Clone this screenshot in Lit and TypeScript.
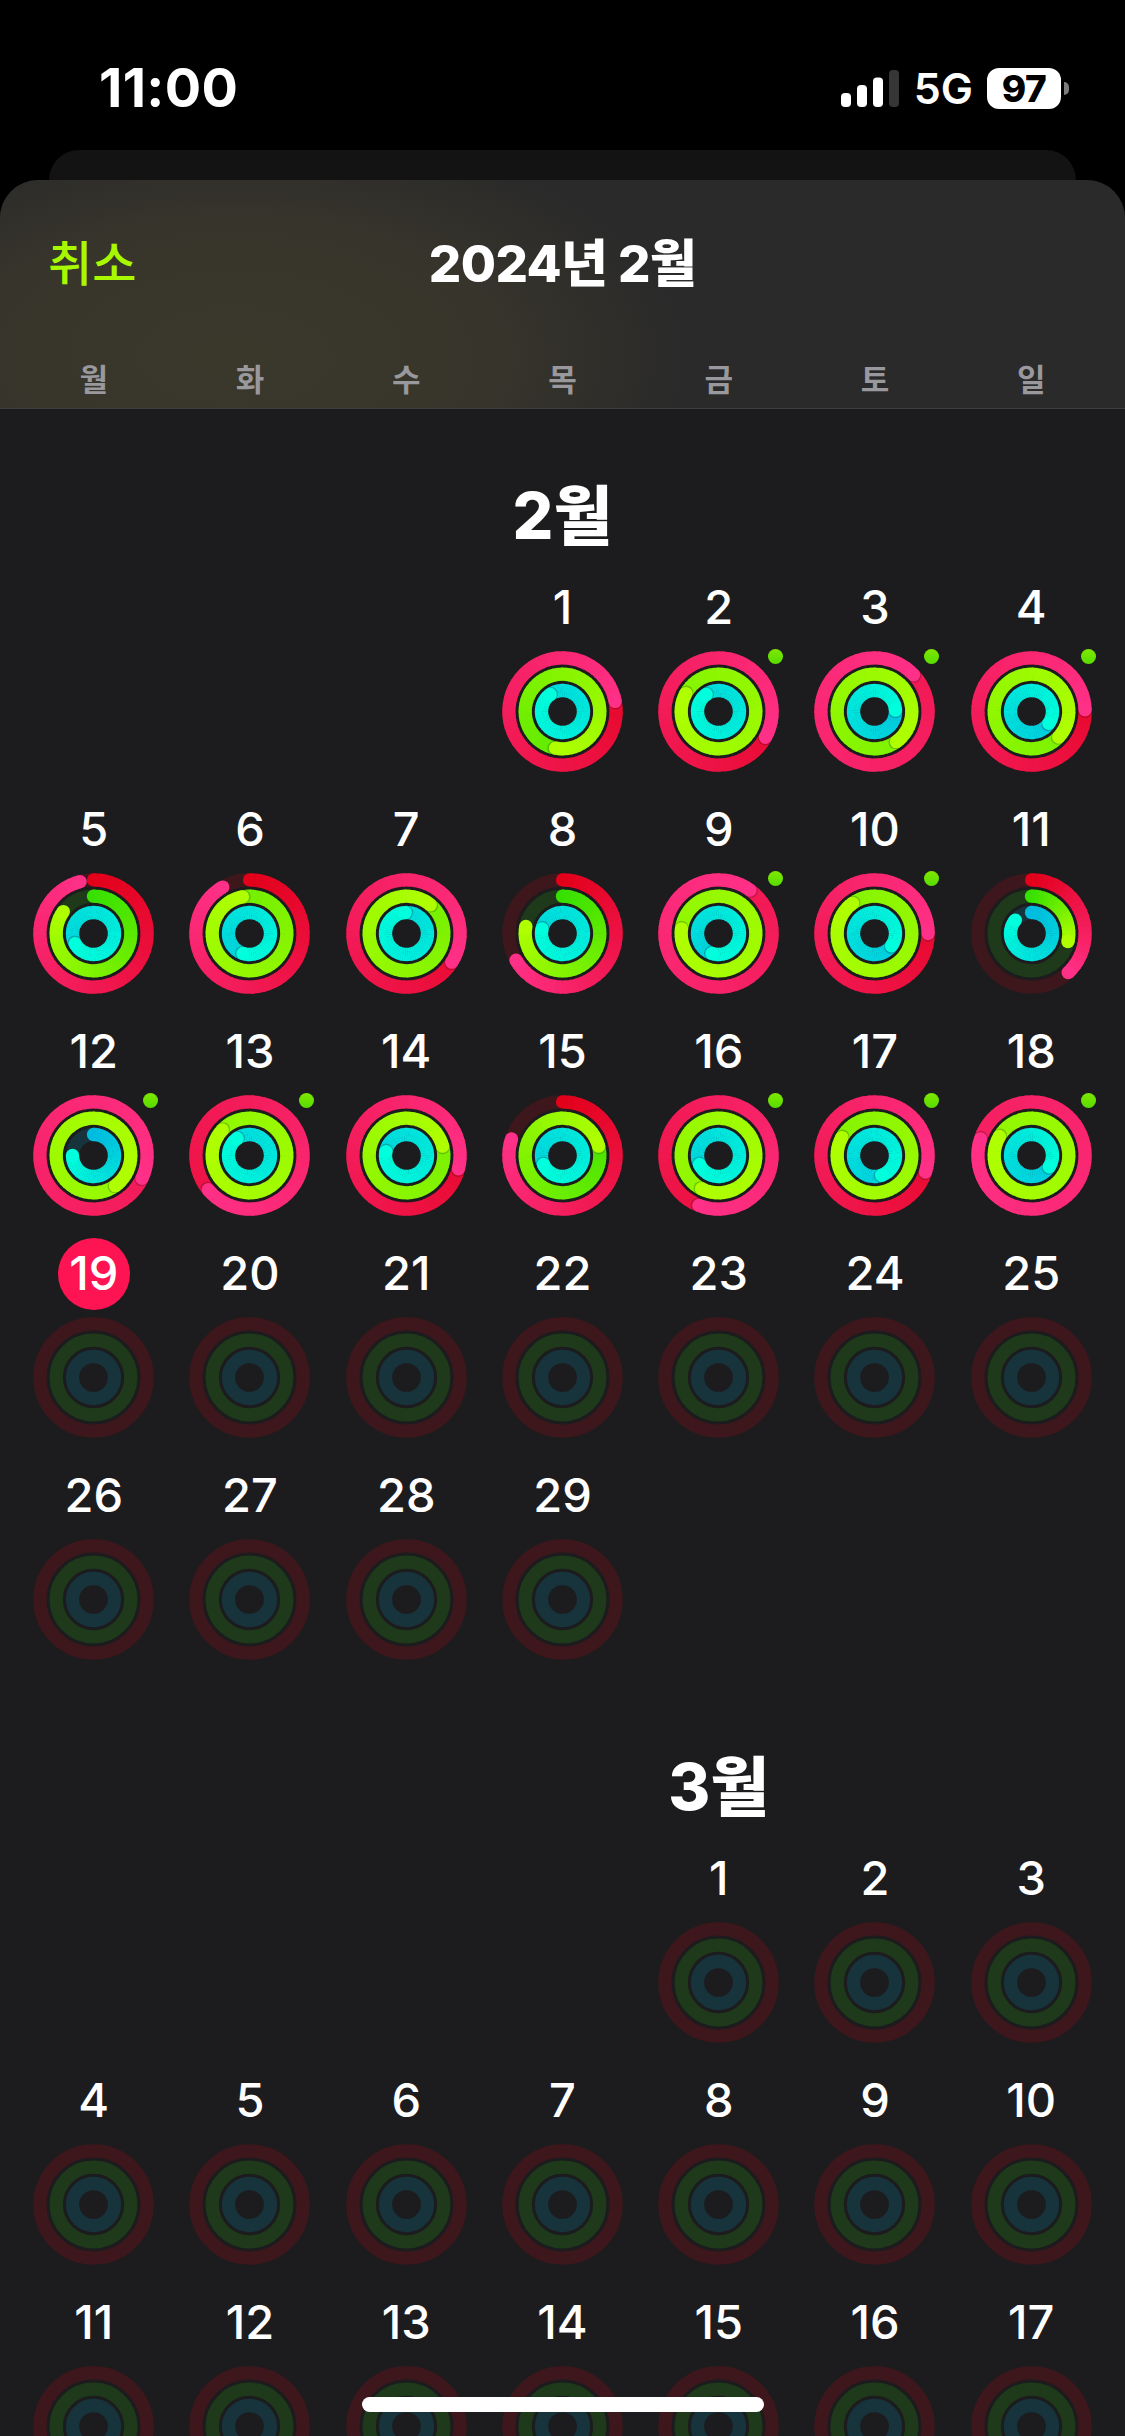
import { LitElement, html, css, svg } from "lit";
import { customElement } from "lit/decorators.js";

type RGB = [number, number, number];
const PALETTE: { r: number; from: RGB; to: RGB; track: string }[] = [
  { r: 53.6, from: [226, 0, 26], to: [255, 48, 135], track: "#3d171c" },
  { r: 37.3, from: [56, 224, 0], to: [176, 255, 0], track: "#1f3a1a" },
  { r: 21, from: [0, 188, 224], to: [0, 255, 220], track: "#17333b" },
];
const SW = 13.3;
const C = 60.5;

// Progress of the move / exercise / stand rings; values above 1 have lapped.
const FEB: Record<number, [number, number, number]> = {
  1: [1.22, 1.53, 1.9], 2: [1.33, 2.83, 1.9], 3: [2.13, 2.4, 1.24], 4: [1.245, 2.37, 1.345],
  5: [0.96, 0.85, 1.67], 6: [0.917, 1.97, 1.55], 7: [1.34, 2.11, 1.99], 8: [0.667, 0.78, 1.785],
  9: [2.1, 3.77, 1.55], 10: [1.25, 2.9, 1.35], 11: [0.38, 0.285, 0.86], 12: [2.32, 4.4, 0.75],
  13: [1.64, 3.87, 1.9], 14: [1.29, 2.21, 1.78], 15: [0.8, 1.21, 1.68], 16: [1.56, 3.575, 1.68],
  17: [1.3, 2.83, 1.445], 18: [2.8, 3.835, 1.34],
};
const BADGES = new Set([2, 3, 4, 9, 10, 12, 13, 16, 17, 18]);
const WEEKDAYS = ["월", "화", "수", "목", "금", "토", "일"];

const pt = (r: number, p: number): [number, number] => {
  const a = p * Math.PI * 2;
  return [C + r * Math.sin(a), C - r * Math.cos(a)];
};
const mix = (a: RGB, b: RGB, t: number) =>
  `rgb(${a.map((v, i) => Math.round(v + (b[i] - v) * t)).join(",")})`;

function ringArc(i: number, total: number) {
  const { r, from, to } = PALETTE[i];
  const start = Math.max(0, total - 1);
  const span = total - start;
  const n = Math.max(6, Math.ceil(span * 60));
  const parts = [];
  const [sx, sy] = pt(r, start);
  const [ex, ey] = pt(r, total);
  if (total <= 1) {
    parts.push(svg`<circle cx=${sx} cy=${sy} r=${SW / 2} fill=${mix(from, to, 0)}></circle>`);
  }
  for (let k = 0; k < n; k++) {
    const p0 = start + (span * k) / n;
    const p1 = start + (span * (k + 1)) / n + (k < n - 1 ? 0.003 : 0);
    const [x0, y0] = pt(r, p0);
    const [x1, y1] = pt(r, p1);
    const t = (start + (span * (k + 0.5)) / n) / total;
    parts.push(
      svg`<path d="M${x0.toFixed(2)} ${y0.toFixed(2)}A${r} ${r} 0 0 1 ${x1.toFixed(2)} ${y1.toFixed(2)}" fill="none" stroke-width=${SW} stroke=${mix(from, to, t)}></path>`
    );
  }
  if (total > 1) {
    const [hx, hy] = pt(r, total + 1.2 / (2 * Math.PI * r));
    parts.push(svg`<circle cx=${hx} cy=${hy} r=${SW / 2 + 0.3} fill="#000" opacity=".2"></circle>`);
  }
  parts.push(svg`<circle cx=${ex} cy=${ey} r=${SW / 2} fill=${mix(from, to, 1)}></circle>`);
  return parts;
}

function rings(values?: [number, number, number]) {
  return html`<svg class="ring" viewBox="0 0 121 121" width="121" height="121">
    ${PALETTE.map(
      (p, i) => svg`<circle cx=${C} cy=${C} r=${p.r} fill="none" stroke=${p.track} stroke-width=${SW}></circle>
        ${values ? ringArc(i, values[i]) : ""}`
    )}
  </svg>`;
}

@customElement("app-root")
export class AppRoot extends LitElement {
  static styles = css`
    :host {
      display: block;
      position: relative;
      width: 1125px;
      height: 2436px;
      overflow: hidden;
      background: #000;
      color: #fff;
      font-family: Inter, "Noto Sans CJK KR", sans-serif;
    }
    .status {
      box-sizing: border-box;
      height: 150px;
      padding: 26px 64px 0 99px;
      display: flex;
      align-items: center;
      justify-content: space-between;
    }
    .time { font-size: 54px; font-weight: 700; letter-spacing: 0.4px; line-height: 1; }
    .indicators { display: flex; align-items: center; }
    .signal { display: block; }
    .net { font-size: 43px; font-weight: 600; margin-left: 15px; line-height: 1; }
    .battery {
      position: relative;
      margin-left: 14px;
      width: 74px;
      height: 41px;
      border-radius: 12px;
      background: #fff;
      color: #000;
      font-size: 37px;
      font-weight: 800;
      letter-spacing: -0.5px;
      line-height: 41px;
      text-align: center;
    }
    .battery::after {
      content: "";
      position: absolute;
      right: -8px;
      top: 14px;
      width: 5px;
      height: 13px;
      border-radius: 0 5px 5px 0;
      background: #7b7b7b;
    }
    .backcard {
      height: 30px;
      margin: 0 49px;
      background: #131313;
      border-radius: 34px 34px 0 0;
    }
    .sheet {
      height: calc(2436px - 180px);
      background: #1c1c1e;
      border-radius: 38px 38px 0 0;
      overflow: hidden;
    }
    .head {
      box-sizing: border-box;
      height: 229px;
      padding-top: 53px;
      border-bottom: 1px solid #3e3e40;
      background:
        radial-gradient(ellipse 450px 230px at 235px 175px, rgba(69, 64, 44, 0.6) 0%, rgba(69, 64, 44, 0.5) 55%, rgba(69, 64, 44, 0) 100%),
        #2a2a2a;
    }
    .nav {
      height: 60px;
      padding: 0 48px;
      display: grid;
      grid-template-columns: 1fr auto 1fr;
      align-items: center;
    }
    .cancel { font-size: 48px; font-weight: 500; color: #a8f900; line-height: 62px; }
    .title { font-size: 51px; font-weight: 800; line-height: 60px; letter-spacing: -0.6px; }
    .grid {
      display: grid;
      grid-template-columns: repeat(7, 156.25px);
      padding: 0 15.6px;
    }
    .weekdays { margin-top: 67px; }
    .wd {
      height: 40px;
      line-height: 40px;
      text-align: center;
      font-size: 31px;
      font-weight: 700;
      color: #98989d;
    }
    .body { padding-top: 67px; }
    .month { margin-bottom: 65px; }
    .mtitle {
      height: 80px;
      line-height: 80px;
      margin-bottom: 16px;
      text-align: center;
      font-size: 64px;
      font-weight: 800;
      white-space: nowrap;
    }
    .day {
      height: 222px;
      display: flex;
      flex-direction: column;
      align-items: center;
    }
    .num {
      width: 72px;
      height: 72px;
      line-height: 70px;
      text-align: center;
      font-size: 47px;
      font-weight: 500;
      border-radius: 50%;
      white-space: nowrap;
      display: flex;
      justify-content: center;
    }
    .num.today { background: #ff1453; }
    .ringwrap { position: relative; margin-top: 7px; width: 121px; height: 121px; }
    .ring { display: block; }
    .dot {
      position: absolute;
      left: 110px;
      top: -2px;
      width: 15px;
      height: 15px;
      border-radius: 50%;
      background: linear-gradient(#7ee800, #58dc00);
    }
    .home {
      position: absolute;
      left: 362px;
      top: 2397px;
      width: 402px;
      height: 15px;
      border-radius: 8px;
      background: #fff;
    }
  `;

  private month(label: string, offset: number, last: number, data: boolean, today = 0) {
    const days = Array.from({ length: last }, (_, i) => i + 1);
    return html`<section class="month">
      <div class="grid">
        <div class="mtitle" style="grid-column:${offset + 1}">${label}</div>
      </div>
      <div class="grid">
        ${days.map(
          (d) => html`<div class="day" style=${d === 1 ? `grid-column:${offset + 1}` : ""}>
            <div class="num ${d === today ? "today" : ""}">${d}</div>
            <div class="ringwrap">
              ${rings(data ? FEB[d] : undefined)}
              ${data && BADGES.has(d) ? html`<span class="dot"></span>` : ""}
            </div>
          </div>`
        )}
      </div>
    </section>`;
  }

  render() {
    return html`
      <div class="status">
        <span class="time">11:00</span>
        <div class="indicators">
          <svg class="signal" width="58" height="37" viewBox="0 0 58 37">
            <rect x="0" y="23" width="10" height="14" rx="4" fill="#fff"></rect>
            <rect x="16" y="15" width="10" height="22" rx="4" fill="#fff"></rect>
            <rect x="32" y="7.5" width="10" height="29.5" rx="4" fill="#fff"></rect>
            <rect x="48" y="0" width="10" height="37" rx="4" fill="#363636"></rect>
          </svg>
          <span class="net">5G</span>
          <span class="battery">97</span>
        </div>
      </div>
      <div class="backcard"></div>
      <div class="sheet">
        <header class="head">
          <div class="nav">
            <span class="cancel">취소</span>
            <span class="title">2024년 2월</span>
            <span></span>
          </div>
          <div class="grid weekdays">
            ${WEEKDAYS.map((w) => html`<div class="wd">${w}</div>`)}
          </div>
        </header>
        <div class="body">
          ${this.month("2월", 3, 29, true, 19)}
          ${this.month("3월", 4, 17, false)}
        </div>
      </div>
      <div class="home"></div>
    `;
  }
}
